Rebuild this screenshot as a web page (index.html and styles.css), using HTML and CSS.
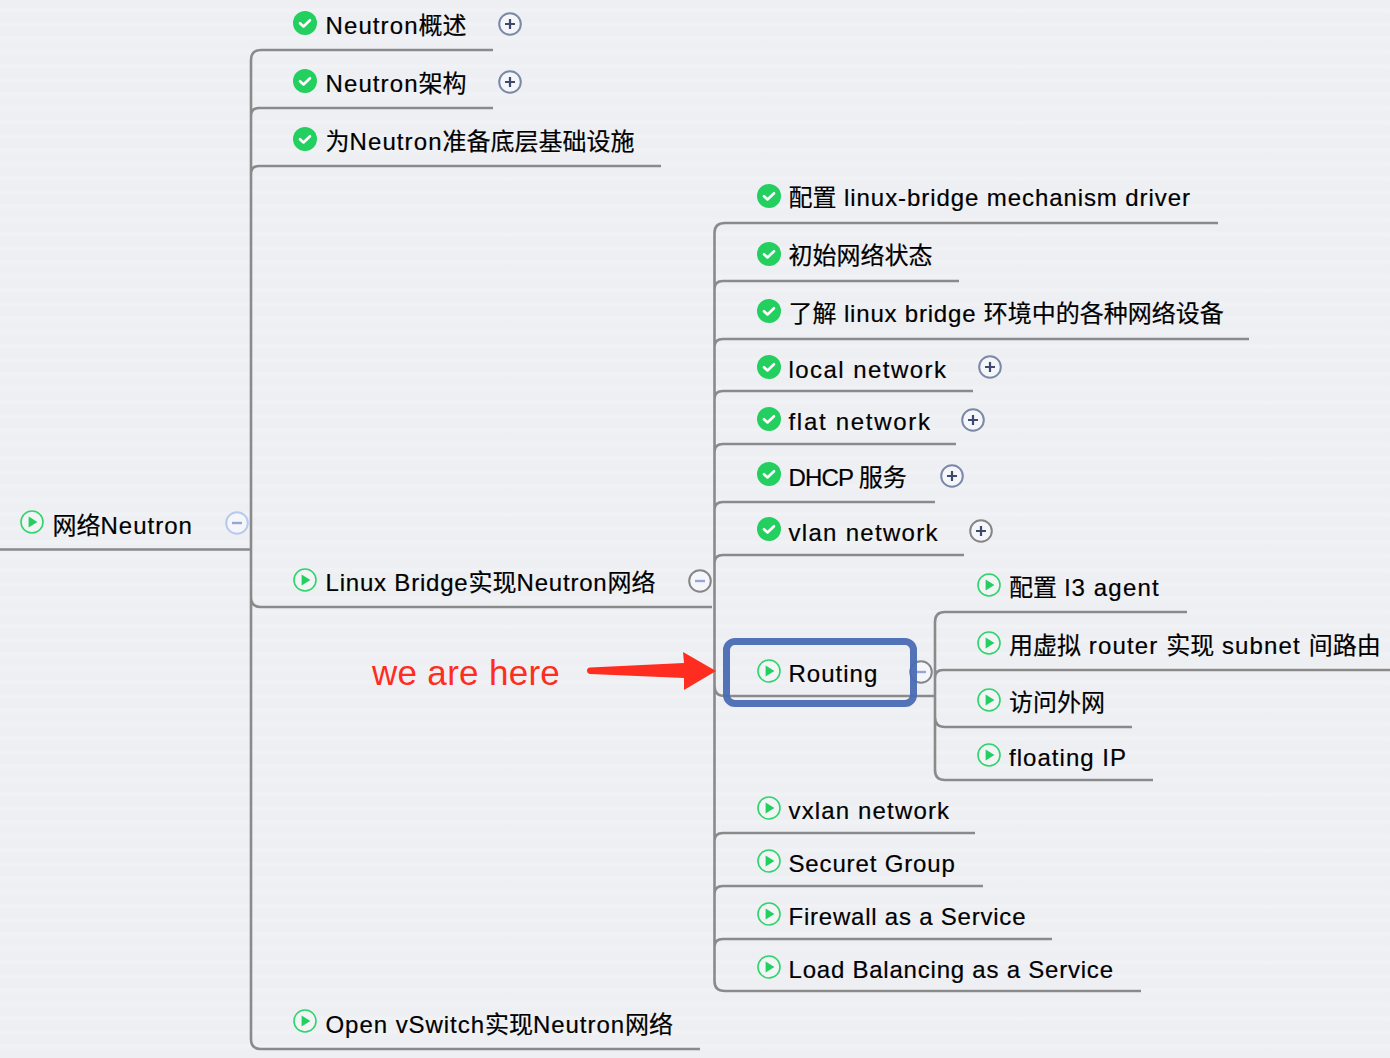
FILE: index.html
```html
<!DOCTYPE html>
<html lang="zh">
<head>
<meta charset="utf-8">
<title>网络Neutron</title>
<link rel="stylesheet" href="styles.css">
</head>
<body>
<svg class="defs" width="0" height="0" aria-hidden="true">
  <symbol id="done" viewBox="0 0 24 24"><circle cx="12" cy="12" r="12" fill="#22cf5f"/><path d="M7 12.2l3.5 3.3L17 9.2" fill="none" stroke="#fff" stroke-width="2.6" stroke-linecap="round" stroke-linejoin="round"/></symbol>
  <symbol id="play" viewBox="0 0 24 24"><circle cx="12" cy="12" r="11" fill="#f2f4f6" stroke="#2fd46c" stroke-width="1.6"/><path d="M8.6 6.6L17.4 12l-8.8 5.4z" fill="#22cf5f"/></symbol>
  <symbol id="plus" viewBox="0 0 24 24"><circle cx="12" cy="12" r="10.800" fill="#f5f6fa" stroke="currentColor" stroke-width="2"/><path d="M12 7v10M7 12h10" stroke="#3d4a6b" stroke-width="2.200"/></symbol>
  <symbol id="minus" viewBox="0 0 24 24"><circle cx="12" cy="12" r="10.800" fill="#f5f6fa" stroke="currentColor" stroke-width="2"/><path d="M7 12h10" stroke="#97a6d6" stroke-width="2.400"/></symbol>
</svg>
<main class="canvas">
  <svg class="wires" width="1390" height="1058" viewBox="0 0 1390 1058" aria-hidden="true">
    <path d="M0 549.500H251M251 60Q251 50 261 50H493M251 116Q251 108 259 108H493M251 174Q251 166 259 166H661M251 597Q251 607 261 607H712M251 1039Q251 1049 261 1049H700M251 60V1039"/>
    <path d="M714.500 233Q714.500 223 725 223H1218M714.500 289Q714.500 281 723 281H959M714.500 347Q714.500 339 723 339H1249M714.500 399Q714.500 391 723 391H973M714.500 452Q714.500 444 723 444H956M714.500 510Q714.500 502 723 502H935M714.500 563Q714.500 555 723 555H964M714.500 686Q714.500 696 725 696H935M714.500 841Q714.500 833 723 833H975M714.500 894Q714.500 886 723 886H983M714.500 947Q714.500 939 723 939H1052M714.500 981Q714.500 991 725 991H1141M714.500 233V981"/>
    <path d="M935 622Q935 612 945 612H1187M935 678Q935 670 943 670H1390M935 717Q935 727 945 727H1132M935 770Q935 780 945 780H1153M935 622V770"/>
  </svg>

  <div class="node root"><svg class="ico"><use href="#play"/></svg><span><i class="zh">网络</i>Neutron</span></div>
  <div class="node a1"><svg class="ico"><use href="#done"/></svg><span>Neutron<i class="zh">概述</i></span></div>
  <div class="node a2"><svg class="ico"><use href="#done"/></svg><span>Neutron<i class="zh">架构</i></span></div>
  <div class="node a3"><svg class="ico"><use href="#done"/></svg><span><i class="zh">为</i>Neutron<i class="zh">准备底层基础设施</i></span></div>
  <div class="node a4"><svg class="ico"><use href="#play"/></svg><span>Linux Bridge<i class="zh">实现</i>Neutron<i class="zh">网络</i></span></div>
  <div class="node a5"><svg class="ico"><use href="#play"/></svg><span>Open vSwitch<i class="zh">实现</i>Neutron<i class="zh">网络</i></span></div>

  <div class="node b1"><svg class="ico"><use href="#done"/></svg><span><i class="zh">配置</i> linux-bridge mechanism driver</span></div>
  <div class="node b2"><svg class="ico"><use href="#done"/></svg><span><i class="zh">初始网络状态</i></span></div>
  <div class="node b3"><svg class="ico"><use href="#done"/></svg><span><i class="zh">了解</i> linux bridge <i class="zh">环境中的各种网络设备</i></span></div>
  <div class="node b4"><svg class="ico"><use href="#done"/></svg><span>local network</span></div>
  <div class="node b5"><svg class="ico"><use href="#done"/></svg><span>flat network</span></div>
  <div class="node b6"><svg class="ico"><use href="#done"/></svg><span>DHCP <i class="zh">服务</i></span></div>
  <div class="node b7"><svg class="ico"><use href="#done"/></svg><span>vlan network</span></div>
  <div class="node b8"><svg class="ico"><use href="#play"/></svg><span>Routing</span></div>
  <div class="node b9"><svg class="ico"><use href="#play"/></svg><span>vxlan network</span></div>
  <div class="node b10"><svg class="ico"><use href="#play"/></svg><span>Securet Group</span></div>
  <div class="node b11"><svg class="ico"><use href="#play"/></svg><span>Firewall as a Service</span></div>
  <div class="node b12"><svg class="ico"><use href="#play"/></svg><span>Load Balancing as a Service</span></div>

  <div class="node c1"><svg class="ico"><use href="#play"/></svg><span><i class="zh">配置</i> l3 agent</span></div>
  <div class="node c2"><svg class="ico"><use href="#play"/></svg><span><i class="zh">用虚拟</i> router <i class="zh">实现</i> subnet <i class="zh">间路由</i></span></div>
  <div class="node c3"><svg class="ico"><use href="#play"/></svg><span><i class="zh">访问外网</i></span></div>
  <div class="node c4"><svg class="ico"><use href="#play"/></svg><span>floating IP</span></div>

  <svg class="tog slate t1"><use href="#plus"/></svg>
  <svg class="tog slate t2"><use href="#plus"/></svg>
  <svg class="tog slate t3"><use href="#plus"/></svg>
  <svg class="tog slate t4"><use href="#plus"/></svg>
  <svg class="tog slate t5"><use href="#plus"/></svg>
  <svg class="tog gray t6"><use href="#plus"/></svg>
  <svg class="tog pale t7"><use href="#minus"/></svg>
  <svg class="tog gray t8"><use href="#minus"/></svg>
  <svg class="tog gray t9"><use href="#minus"/></svg>

  <div class="focus"></div>
  <div class="note">we are here</div>
  <svg class="arrow" width="130" height="40" viewBox="0 0 130 40" aria-hidden="true"><path d="M3 15.500L97 11 96 0 129 19 97 38 97 26 3 22Q0 21.500 0 18.500 0 15.800 3 15.500z"/></svg>
</main>
</body>
</html>
```
FILE: styles.css
```css
* { box-sizing: border-box; }
html, body { margin: 0; padding: 0; }
body {
  width: 1390px;
  height: 1058px;
  overflow: hidden;
  background: #eff0f4;
}
.defs { position: absolute; }
.canvas {
  position: relative;
  width: 1390px;
  height: 1058px;
  overflow: hidden;
  background: repeating-linear-gradient(180deg, #eeeff3 0, #eeeff3 7px, #f1f2f5 10px, #eeeff3 14px);
  font-family: "Liberation Sans", "Noto Sans CJK SC", sans-serif;
  color: #000;
}
.wires { position: absolute; left: 0; top: 0; }
.wires path { fill: none; stroke: #8a8a8a; stroke-width: 2.6; }

.node {
  position: absolute;
  display: flex;
  align-items: flex-start;
  gap: 8.5px;
  height: 28px;
  font-size: 24px;
  line-height: 28px;
  white-space: nowrap;
}
.node span { padding-top: 1px; -webkit-text-stroke: 0.2px #000; }
.ico { width: 24px; height: 24px; flex: none; }
.zh { font-style: normal; letter-spacing: 0; }

.root { left: 20px; top: 510px; letter-spacing: 1px; }
.root span { padding-top: 2px; }
.a1 { left: 293px; top: 11px; letter-spacing: 1.1px; }
.a2 { left: 293px; top: 69px; letter-spacing: 1.1px; }
.a3 { left: 293px; top: 127px; letter-spacing: 1.1px; }
.a4 { left: 293px; top: 568px; letter-spacing: 0.8px; }
.a5 { left: 293px; top: 1009px; letter-spacing: 0.95px; }
.a5 span { padding-top: 2px; }

.b1, .b2, .b3, .b4, .b5, .b6, .b7, .b8, .b9, .b10, .b11, .b12 { left: 757px; gap: 7.5px; }
.b1 { top: 184px; letter-spacing: 0.92px; }
.b1 span, .b2 span { padding-top: 0; }
.b2 { top: 242px; }
.b3 { top: 299px; letter-spacing: 0.8px; }
.b4 { top: 355px; letter-spacing: 1.45px; }
.b5 { top: 407px; letter-spacing: 1.7px; }
.b6 { top: 462px; letter-spacing: -0.8px; }
.b6 span, .b7 span { padding-top: 2px; }
.b7 { top: 517px; letter-spacing: 1.3px; }
.b8 { top: 659px; letter-spacing: 1px; }
.b9 { top: 796px; letter-spacing: 1.15px; }
.b10 { top: 849px; letter-spacing: 0.85px; }
.b11 { top: 902px; letter-spacing: 0.78px; }
.b12 { top: 955px; letter-spacing: 0.78px; }

.c1, .c2, .c3, .c4 { left: 977px; gap: 8px; }
.c1 { top: 573px; letter-spacing: 1.2px; }
.c2 { top: 631px; letter-spacing: 1.14px; }
.c3 { top: 688px; }
.c4 { top: 743px; letter-spacing: 1.03px; }

.tog { position: absolute; width: 24px; height: 24px; }
.slate { color: #7b89a8; }
.gray { color: #868686; }
.pale { color: #b9c8ef; }
.t1 { left: 498px; top: 12px; }
.t2 { left: 498px; top: 70px; }
.t3 { left: 978px; top: 355px; }
.t4 { left: 961px; top: 408px; }
.t5 { left: 940px; top: 464px; }
.t6 { left: 969px; top: 519px; }
.t7 { left: 225px; top: 511px; }
.t8 { left: 688px; top: 569px; }
.t9 { left: 909px; top: 660px; }

.focus {
  position: absolute;
  left: 723px;
  top: 638px;
  width: 194px;
  height: 69px;
  border: 7px solid #4a6cb5;
  border-radius: 12px;
  opacity: 0.95;
}
.note {
  position: absolute;
  left: 372px;
  top: 653px;
  font-size: 35px;
  letter-spacing: 0.3px;
  line-height: 40px;
  color: #ff2d20;
  white-space: nowrap;
}
.arrow { position: absolute; left: 587px; top: 652px; }
.arrow path { fill: #ff2d1f; }
```
